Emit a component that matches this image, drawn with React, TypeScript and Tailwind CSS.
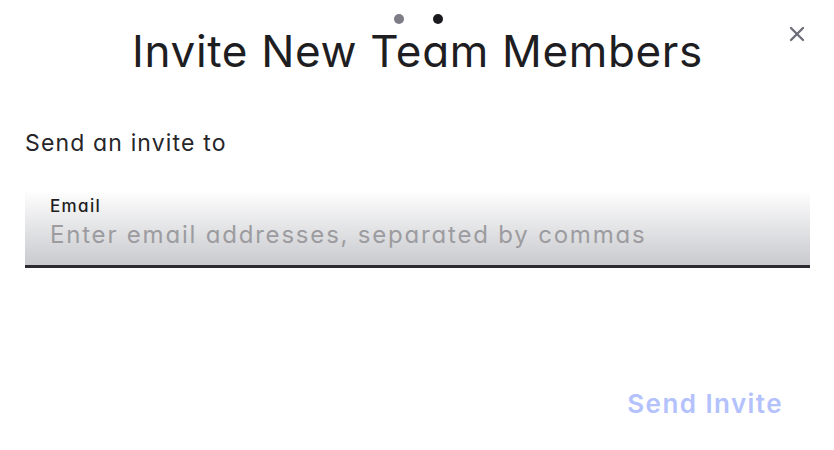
import { X } from "lucide-react";

export default function App() {
  return (
    <div className="relative h-[450px] w-[834px] bg-white font-['Inter',sans-serif] text-[#1e1e22] [font-feature-settings:'cv11']">
      {/* step dots */}
      <div className="absolute left-[394px] top-[14px] flex gap-[29px]">
        <span className="h-[10px] w-[10px] rounded-full bg-[#7d7c87]" />
        <span className="h-[10px] w-[10px] rounded-full bg-[#1a1a1e]" />
      </div>
      <button className="absolute right-[25px] top-[22px] text-[#6c6c78]" aria-label="Close">
        <X className="h-[24px] w-[24px]" strokeWidth={2.3} />
      </button>

      <div className="flex flex-col pl-[25px] pr-[24px] pt-[24px]">
        <h1 className="text-center text-[44px] font-normal leading-[54px] tracking-[0.015em]">
          Invite New Team Members
        </h1>
        <p className="mt-[51px] text-[23px] leading-[28px] tracking-[0.05em] text-[#26262a]">
          Send an invite to
        </p>

        <div className="mt-[33px] flex h-[78px] flex-col border-b-[3px] border-[#2a2a30] bg-gradient-to-b from-white to-[#c9cace] px-[25px] pt-[6px]">
          <label className="text-[17px] font-medium leading-[21px] tracking-[0.08em] text-[#1e1e22]">
            Email
          </label>
          <input
            className="mt-[3px] bg-transparent text-[24px] leading-[29px] tracking-[0.075em] text-[#1e1e22] outline-none placeholder:text-[#9c9ca0]"
            placeholder="Enter email addresses, separated by commas"
          />
        </div>

        <div className="mt-[120px] flex justify-end pr-[27px]">
          <button className="text-[26px] font-semibold leading-[32px] tracking-[0.055em] text-[#b3c1fc]">
            Send Invite
          </button>
        </div>
      </div>
    </div>
  );
}
